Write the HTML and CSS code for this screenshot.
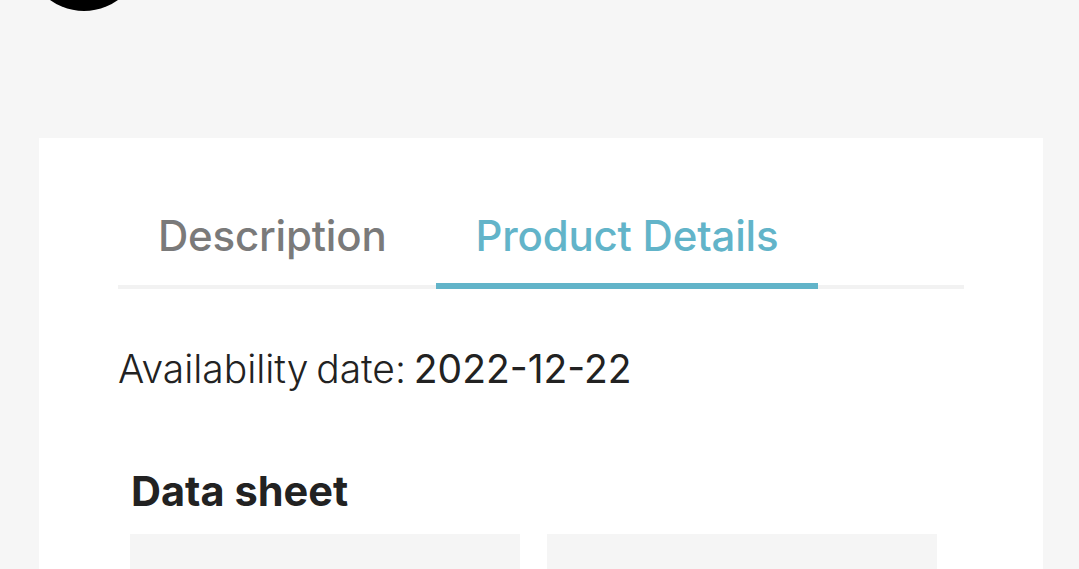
FILE: index.html
```html
<!DOCTYPE html>
<html lang="en">
<head>
<meta charset="utf-8">
<title>Product</title>
<link rel="stylesheet" href="styles.css">
</head>
<body>
<header class="header">
  <div class="logo"></div>
</header>
<main class="card">
  <nav class="tabs">
    <a class="tab">Description</a>
    <a class="tab active">Product Details</a>
  </nav>
  <section class="details">
    <p class="availability"><span class="label">Availability date:</span> <span class="value">2022-12-22</span></p>
    <h2 class="sheet-title">Data sheet</h2>
    <div class="sheet">
      <div class="cell"></div>
      <div class="cell"></div>
    </div>
  </section>
</main>
</body>
</html>
```
FILE: styles.css
```css
html, body {
  margin: 0;
  padding: 0;
}
body {
  background: #f6f6f6;
  font-family: Inter, "Noto Sans", sans-serif;
  color: #222;
  overflow: hidden;
  height: 569px;
}
.header {
  display: flex;
  align-items: flex-start;
  height: 138px;
  padding-left: 26px;
  box-sizing: border-box;
}
.logo {
  width: 116px;
  height: 116px;
  border-radius: 50%;
  background: #000;
  margin-top: -105px;
}
.card {
  background: #fff;
  margin-left: 39px;
  width: 1004px;
  box-sizing: border-box;
  padding: 72px 79px 0 79px;
  height: 431px;
  overflow: hidden;
}
.tabs {
  display: flex;
  border-bottom: 4px solid #f2f2f2;
}
.tab {
  font-size: 42px;
  line-height: 52px;
  padding: 0 40px 21px 40px;
  margin-bottom: -4px;
  border-bottom: 6px solid transparent;
  color: #7a7a7a;
  font-weight: 500;
  letter-spacing: -0.2px;
  margin-right: 10px;
}
.tab.active {
  color: #62b4c9;
  border-bottom-color: #62b4c9;
  padding-left: 39px;
}
.details {
  padding-top: 56px;
}
.availability {
  margin: 0;
  font-size: 39px;
  line-height: 48px;
  word-spacing: -3px;
}
.label {
  font-weight: 300;
  letter-spacing: -0.05px;
}
.value {
  font-weight: 400;
}
.sheet-title {
  margin: 74px 0 0 13px;
  font-size: 41.5px;
  line-height: 48px;
  font-weight: 700;
}
.sheet {
  display: grid;
  grid-template-columns: 390px 390px;
  gap: 27px;
  margin: 19px 0 0 12px;
}
.cell {
  background: #f5f5f5;
  height: 120px;
}
```
